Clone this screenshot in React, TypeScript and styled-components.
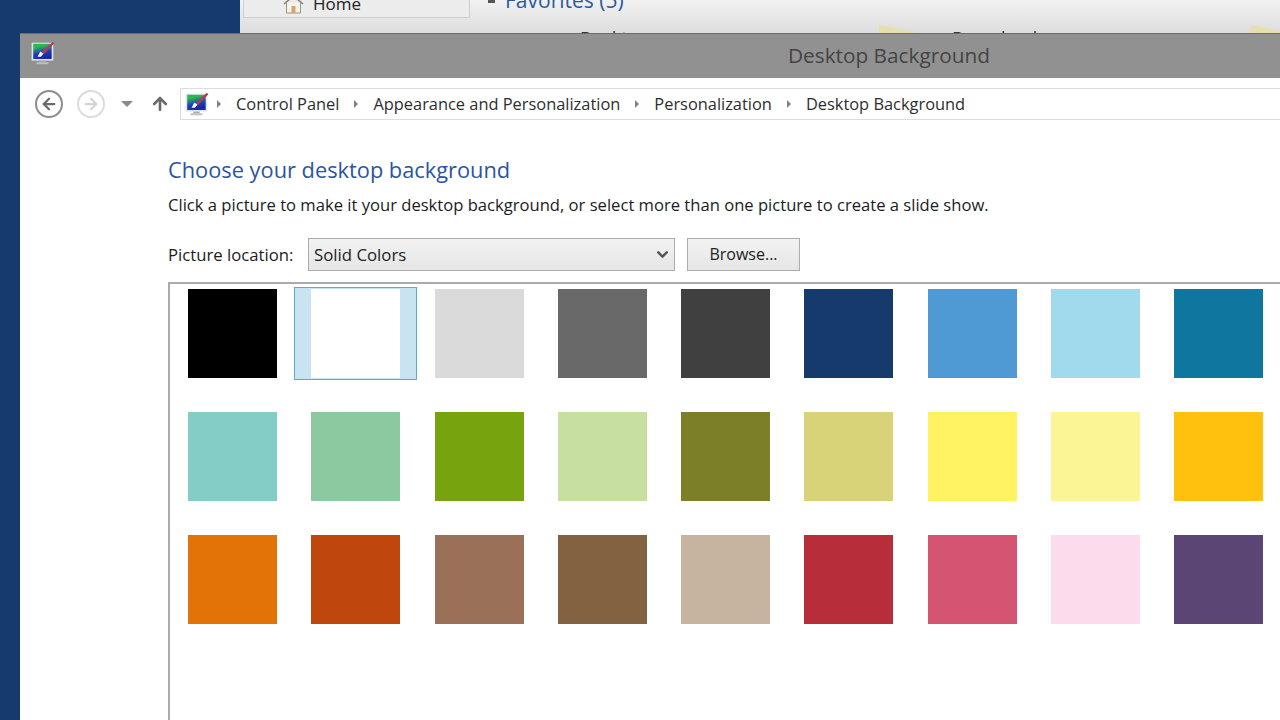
import styled, { createGlobalStyle } from "styled-components";
import { ArrowLeft, ArrowRight, ArrowUp, ChevronDown } from "lucide-react";

const swatches = [
  "#000000", "#ffffff", "#dadada", "#696969", "#404040", "#163a6c", "#4f9ad4", "#a0daec", "#0f76a0",
  "#83cdc6", "#8cc8a0", "#76a30e", "#c8dfa2", "#7c7f28", "#d8d378", "#fff263", "#fbf595", "#ffc10e",
  "#e37306", "#c0470b", "#9b7059", "#836242", "#c6b3a0", "#b72d3a", "#d45472", "#fcdcec", "#5a4574",
];

const crumbs = ["Control Panel", "Appearance and Personalization", "Personalization", "Desktop Background"];

const MonitorIcon = ({ size }: { size: number }) => (
  <svg width={size} height={size} viewBox="0 0 24 24">
    <defs>
      <linearGradient id="screenFill" x1="0" y1="0" x2="0.3" y2="1">
        <stop offset="0.25" stopColor="#2fb84f" />
        <stop offset="0.65" stopColor="#1c44b4" />
        <stop offset="1" stopColor="#1626a8" />
      </linearGradient>
    </defs>
    <rect x="1.5" y="2.5" width="20" height="16.5" fill="#dfe3ea" />
    <rect x="3" y="3.5" width="17" height="14" fill="url(#screenFill)" />
    <path d="M7 15.5l2.5-5 3 2-2.5 3z" fill="#f4f6fa" />
    <path d="M11 11l10-9.5 1.5 1.5-9.5 10z" fill="#b43a5c" />
    <rect x="8.5" y="19" width="6" height="1.6" fill="#a8adb5" />
    <rect x="6" y="20.6" width="11" height="1.8" fill="#bcc0c6" />
  </svg>
);

const App = () => {
  return (
    <Desktop>
      <GlobalStyle />
      <ExplorerBehind>
        <HomeButton>
          <svg width="21" height="20" viewBox="0 0 21 20">
            <path d="M1 10L10.5 2 20 10" fill="none" stroke="#8b8378" strokeWidth="1.6" />
            <path d="M3.5 9v10h14V9" fill="#f6f3ec" stroke="#9a9388" />
            <rect x="8.5" y="12" width="4" height="7" fill="#d8a768" />
          </svg>
          Home
        </HomeButton>
        <Favorites>
          <Dash />
          Favorites (5)
        </Favorites>
        <BehindLabel $left={340}>Desktop</BehindLabel>
        <BehindFolder $left={639} />
        <BehindLabel $left={712}>Downloads</BehindLabel>
        <BehindFolder $left={1011} />
      </ExplorerBehind>

      <Window>
        <TitleBar>
          <TitleIcon>
            <MonitorIcon size={26} />
          </TitleIcon>
          Desktop Background
        </TitleBar>

        <NavBar>
          <RoundButton>
            <ArrowLeft size={18} strokeWidth={3} />
          </RoundButton>
          <RoundButton $disabled>
            <ArrowRight size={18} strokeWidth={3} />
          </RoundButton>
          <HistoryArrow />
          <UpButton>
            <ArrowUp size={20} strokeWidth={3.2} />
          </UpButton>
          <AddressBar>
            <AddressIcon>
              <MonitorIcon size={26} />
            </AddressIcon>
            {crumbs.map((crumb) => (
              <Crumb key={crumb}>
                <Caret />
                {crumb}
              </Crumb>
            ))}
          </AddressBar>
        </NavBar>

        <Content>
          <Heading>Choose your desktop background</Heading>
          <Description>
            Click a picture to make it your desktop background, or select more than one picture to create a slide show.
          </Description>
          <LocationRow>
            <LocationLabel>Picture location:</LocationLabel>
            <LocationSelect>
              Solid Colors
              <ChevronDown size={17} strokeWidth={3.4} color="#555" />
            </LocationSelect>
            <BrowseButton>Browse...</BrowseButton>
          </LocationRow>
          <PictureList>
            {swatches.map((colour, i) => (
              <SwatchCell key={colour + i} $selected={i === 1}>
                <Swatch $colour={colour} />
              </SwatchCell>
            ))}
          </PictureList>
        </Content>
      </Window>
    </Desktop>
  );
};

export default App;

const GlobalStyle = createGlobalStyle`
  html, body {
    margin: 0;
    padding: 0;
    overflow: hidden;
  }
  body {
    font-family: "Open Sans", "Noto Sans", sans-serif;
  }
`;

const Desktop = styled.div`
  position: relative;
  width: 1280px;
  height: 720px;
  overflow: hidden;
  background: #163a6c;
`;

const ExplorerBehind = styled.div`
  position: absolute;
  left: 240px;
  top: 0;
  width: 1040px;
  height: 33px;
  background: linear-gradient(#f1f1f1, #dddddd);
  overflow: hidden;
`;

const HomeButton = styled.div`
  position: absolute;
  left: 3px;
  top: -14px;
  width: 227px;
  height: 32px;
  box-sizing: border-box;
  padding: 3px 0 0 39px;
  display: flex;
  align-items: center;
  gap: 9px;
  background: #ececec;
  border: 1px solid #cfcfcf;
  font-size: 17px;
  color: #222;
`;

const Favorites = styled.div`
  position: absolute;
  left: 248px;
  top: -12px;
  display: flex;
  align-items: flex-start;
  gap: 10px;
  font-size: 21px;
  line-height: 24px;
  color: #2a5a9e;
`;

const Dash = styled.span`
  width: 7px;
  height: 3px;
  margin-top: 12px;
  background: #555;
`;

const BehindLabel = styled.div<{ $left: number }>`
  position: absolute;
  left: ${(p) => p.$left}px;
  top: 27px;
  height: 6px;
  overflow: hidden;
  font-size: 18px;
  line-height: 22px;
  color: #333;
`;

const BehindFolder = styled.div<{ $left: number }>`
  position: absolute;
  left: ${(p) => p.$left}px;
  top: 25px;
  width: 44px;
  height: 9px;
  background: #e6dfae;
  clip-path: polygon(0 0, 100% 100%, 0 100%);
`;

const Window = styled.div`
  position: absolute;
  left: 20px;
  top: 33px;
  width: 1738px;
  height: 720px;
  background: #ffffff;
`;

const TitleBar = styled.div`
  position: relative;
  height: 45px;
  box-sizing: border-box;
  border-top: 1px solid #6c6c6c;
  padding-bottom: 2px;
  background: #919191;
  display: flex;
  align-items: center;
  justify-content: center;
  font-size: 20.8px;
  color: #444444;
`;

const TitleIcon = styled.div`
  position: absolute;
  left: 10px;
  top: 6px;
  line-height: 0;
`;

const NavBar = styled.div`
  display: flex;
  align-items: center;
  height: 52px;
  padding-left: 15px;
`;

const RoundButton = styled.div<{ $disabled?: boolean }>`
  width: 28px;
  height: 28px;
  margin-right: 14px;
  box-sizing: border-box;
  border-radius: 50%;
  border: 2px solid ${(p) => (p.$disabled ? "#dcdcdc" : "#8d8d8d")};
  color: ${(p) => (p.$disabled ? "#d4d4d4" : "#6a6a6a")};
  display: flex;
  align-items: center;
  justify-content: center;
`;

const HistoryArrow = styled.div`
  width: 0;
  height: 0;
  margin-left: 2px;
  border-left: 6px solid transparent;
  border-right: 6px solid transparent;
  border-top: 6px solid #8a8a8a;
`;

const UpButton = styled.div`
  display: flex;
  margin-left: 17px;
  margin-right: 10px;
  color: #6a6a6a;
`;

const AddressBar = styled.div`
  flex: 1;
  height: 32px;
  box-sizing: border-box;
  border: 1px solid #dcdcdc;
  padding: 0 0 1px 3px;
  display: flex;
  align-items: center;
  font-size: 16.4px;
  color: #2e2e2e;
`;

const AddressIcon = styled.div`
  display: flex;
  margin-right: -8px;
`;

const Crumb = styled.div`
  display: flex;
  align-items: center;
  white-space: nowrap;
`;

const Caret = styled.span`
  width: 0;
  height: 0;
  margin: 0 15px;
  border-top: 4px solid transparent;
  border-bottom: 4px solid transparent;
  border-left: 4px solid #808080;
`;

const Content = styled.div`
  padding: 0 0 0 148px;
`;

const Heading = styled.h1`
  margin: 25px 0 0;
  font-size: 21.8px;
  line-height: 30px;
  font-weight: 400;
  color: #2a55a0;
`;

const Description = styled.p`
  margin: 9px 0 0;
  font-size: 16.6px;
  line-height: 22px;
  color: #1c1c1c;
`;

const LocationRow = styled.div`
  display: flex;
  align-items: center;
  margin-top: 21px;
  height: 34px;
`;

const LocationLabel = styled.div`
  width: 140px;
  font-size: 16.7px;
  color: #1c1c1c;
`;

const LocationSelect = styled.div`
  width: 367px;
  height: 33px;
  box-sizing: border-box;
  border: 1px solid #acacac;
  background: linear-gradient(#f2f2f2, #e6e6e6);
  padding: 0 3px 0 5px;
  display: flex;
  align-items: center;
  justify-content: space-between;
  font-size: 16.8px;
  color: #222;
`;

const BrowseButton = styled.div`
  width: 113px;
  height: 33px;
  margin-left: 12px;
  box-sizing: border-box;
  border: 1px solid #acacac;
  background: linear-gradient(#f2f2f2, #e6e6e6);
  display: flex;
  align-items: center;
  justify-content: center;
  font-size: 16px;
  color: #222;
`;

const PictureList = styled.div`
  margin-top: 11px;
  box-sizing: border-box;
  height: 460px;
  border: 2px solid #ababab;
  border-right: none;
  padding: 3px 0 0 1px;
  display: grid;
  grid-template-columns: repeat(9, 123.25px);
  grid-auto-rows: 123px;
`;

const SwatchCell = styled.div<{ $selected?: boolean }>`
  width: 123px;
  height: 93px;
  box-sizing: border-box;
  display: flex;
  align-items: center;
  justify-content: center;
  border: 1.5px solid ${(p) => (p.$selected ? "#5aaad4" : "transparent")};
  background: ${(p) => (p.$selected ? "#c8e3f1" : "transparent")};
`;

const Swatch = styled.div<{ $colour: string }>`
  width: 89px;
  height: 89px;
  background: ${(p) => p.$colour};
`;
